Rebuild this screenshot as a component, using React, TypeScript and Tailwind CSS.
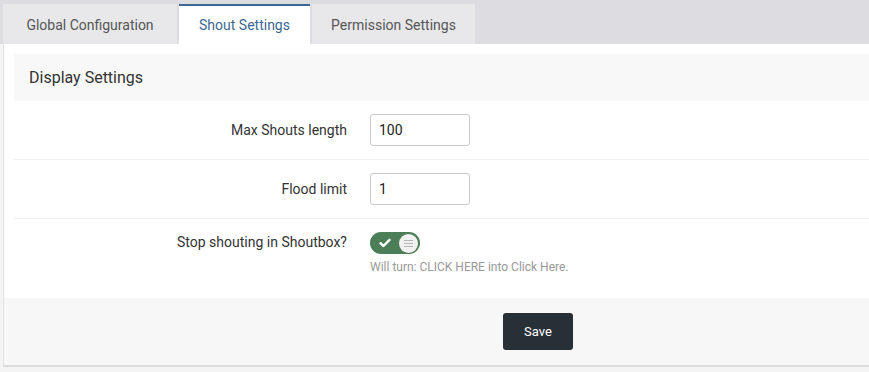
import React from 'react';

const tabs = [
  { label: 'Global Configuration', width: 'w-[174px]', active: false },
  { label: 'Shout Settings', width: 'w-[131px]', active: true },
  { label: 'Permission Settings', width: 'w-[163px]', active: false },
];

const Toggle: React.FC = () => (
  <div className="w-[50px] h-[22px] rounded-full bg-[#4c7e57] flex items-center justify-between pl-[9px] pr-[2px]">
    <svg width="12" height="10" viewBox="0 0 12 10">
      <path d="M1.5 5.2 L4.5 8 L10.5 1.8" fill="none" stroke="#ffffff" strokeWidth="2.4" strokeLinecap="round" strokeLinejoin="round" />
    </svg>
    <div className="w-[19px] h-[19px] rounded-full bg-[#f1f1f1] flex flex-col items-center justify-center gap-[2px]">
      <span className="block w-[9px] h-px bg-[#b5b5b5]" />
      <span className="block w-[9px] h-px bg-[#b5b5b5]" />
      <span className="block w-[9px] h-px bg-[#b5b5b5]" />
    </div>
  </div>
);

const App: React.FC = () => {
  return (
    <div className="w-[869px] h-[372px] overflow-hidden bg-[#f4f4f4] font-['Roboto',sans-serif]">
      {/* tab bar */}
      <div className="h-[44px] bg-[#dddce1] pl-[3px] pt-[4px] flex gap-[2px]">
        {tabs.map((t) => (
          <div
            key={t.label}
            className={`${t.width} h-[40px] flex items-center justify-center text-[14px] ${
              t.active
                ? 'bg-white border-t-2 border-[#3b6894] text-[#3b6894]'
                : 'bg-[#e8e8eb] text-[#555555] pt-[2px]'
            }`}
          >
            {t.label}
          </div>
        ))}
      </div>

      {/* panel */}
      <div className="ml-[3px] border-l border-[#e2e2e2] border-b-2 border-b-[#dcdcdc] bg-white">
        <div className="pt-[10px] pl-[10px]">
          <div className="h-[47px] bg-[#f8f8f8] flex items-center px-[15px] text-[16px] text-[#333333]">
            Display Settings
          </div>

          <div className="h-[59px] flex items-center border-b border-[#eeeeee]">
            <div className="w-[333px] text-right text-[14px] text-[#333333]">Max Shouts length</div>
            <div className="ml-[23px] w-[100px] h-[32px] border border-[#cccccc] rounded-[3px] flex items-center px-[8px] text-[14px] text-[#222222]">
              100
            </div>
          </div>

          <div className="h-[59px] flex items-center border-b border-[#eeeeee]">
            <div className="w-[333px] text-right text-[14px] text-[#333333]">Flood limit</div>
            <div className="ml-[23px] w-[100px] h-[32px] border border-[#cccccc] rounded-[3px] flex items-center px-[8px] text-[14px] text-[#222222]">
              1
            </div>
          </div>

          <div className="h-[79px] flex items-start pt-[13px]">
            <div className="w-[333px] text-right text-[14px] text-[#333333] leading-[20px]">
              Stop shouting in Shoutbox?
            </div>
            <div className="ml-[23px] flex flex-col">
              <Toggle />
              <div className="mt-[4px] text-[12px] text-[#999999]">Will turn: CLICK HERE into Click Here.</div>
            </div>
          </div>
        </div>

        <div className="h-[67px] bg-[#f7f7f7] flex items-center pl-[499px]">
          <button className="w-[70px] h-[37px] rounded-[3px] bg-[#283037] text-white text-[13px]">Save</button>
        </div>
      </div>
    </div>
  );
};

export default App;
